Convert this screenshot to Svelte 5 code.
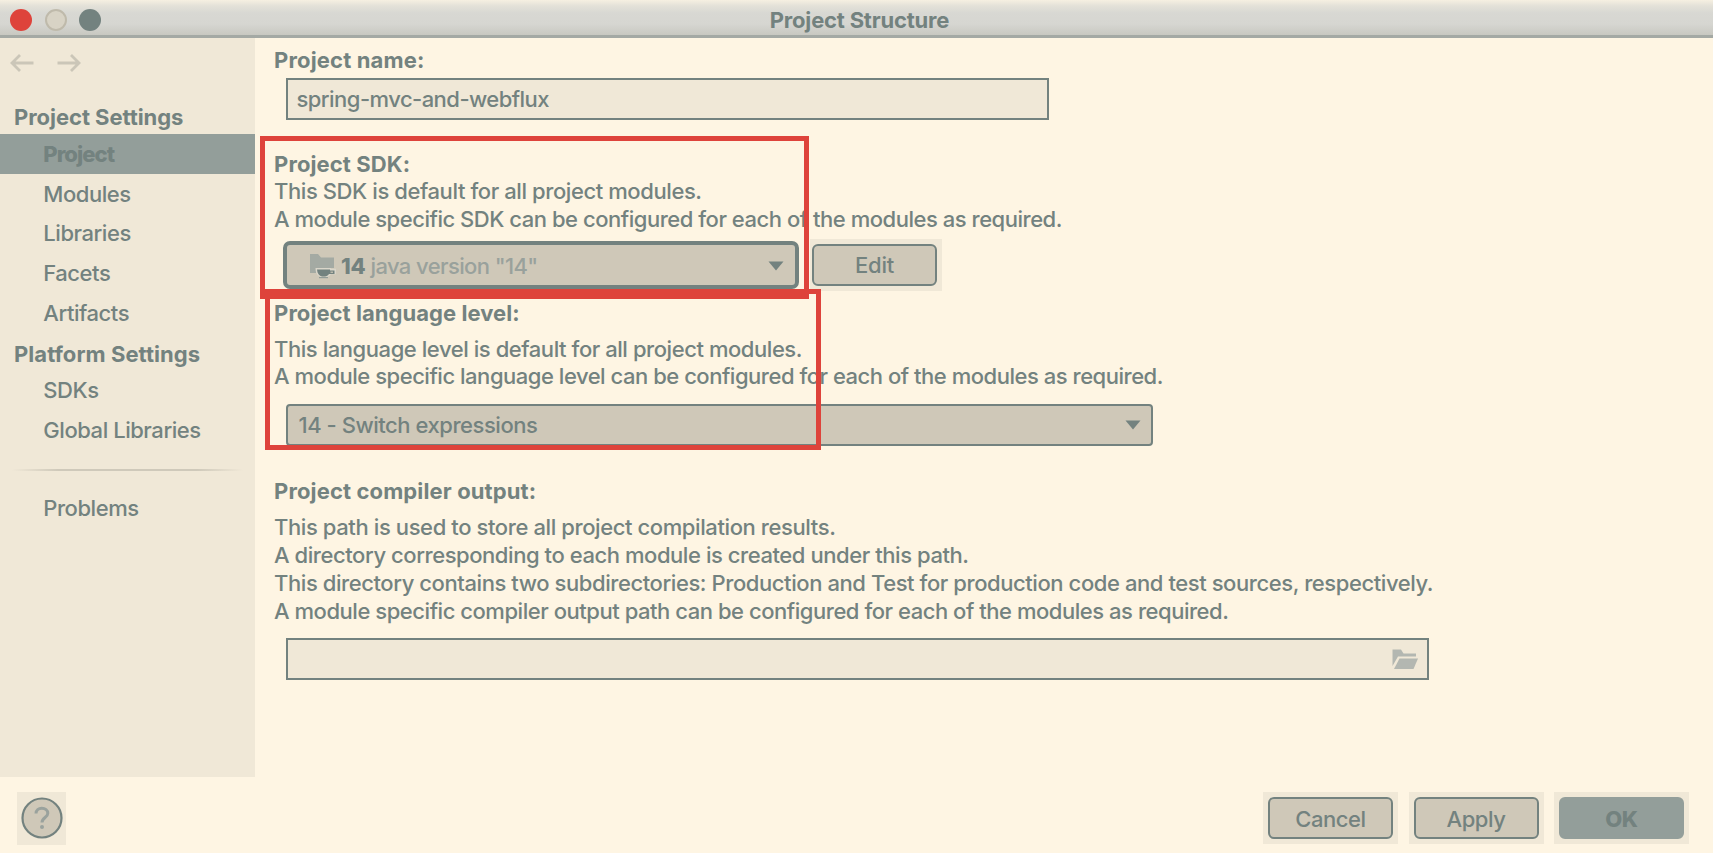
<script>
  const projectItems = ['Project', 'Modules', 'Libraries', 'Facets', 'Artifacts'];
  const platformItems = ['SDKs', 'Global Libraries'];
  let selected = $state('Project');

  // Each line carries its own tracking in px.
  const sdkText = [
    ['This SDK is default for all project modules.', -0.41],
    ['A module specific SDK can be configured for each of the modules as required.', -0.47],
  ];
  const levelText = [
    ['This language level is default for all project modules.', -0.44],
    ['A module specific language level can be configured for each of the modules as required.', -0.475],
  ];
  const outputText = [
    ['This path is used to store all project compilation results.', -0.4],
    ['A directory corresponding to each module is created under this path.', -0.435],
    ['This directory contains two subdirectories: Production and Test for production code and test sources, respectively.', -0.42],
    ['A module specific compiler output path can be configured for each of the modules as required.', -0.46],
  ];
</script>

{#snippet lines(list)}
  {#each list as [text, tracking]}
    <p style="letter-spacing:{tracking}px">{text}</p>
  {/each}
{/snippet}

{#snippet item(name)}
  <button class="item" class:selected={selected === name} onclick={() => (selected = name)}>{name}</button>
{/snippet}

<div class="window">
  <header class="titlebar">
    <div class="lights"><i class="red"></i><i class="pale"></i><i class="dark"></i></div>
    <h1>Project Structure</h1>
  </header>

  <div class="body">
    <nav>
      <div class="history">
        <svg width="24" height="18" viewBox="0 0 24 18"><path d="M23.500 9H2M10 1L2 9l8 8" /></svg>
        <svg width="24" height="18" viewBox="0 0 24 18"><path d="M0.500 9H22M14 1L22 9l-8 8" /></svg>
      </div>
      <h2>Project Settings</h2>
      {#each projectItems as name}{@render item(name)}{/each}
      <h2 class="platform">Platform Settings</h2>
      {#each platformItems as name}{@render item(name)}{/each}
      <div class="rule"></div>
      {@render item('Problems')}
    </nav>

    <main>
      <h3 class="name">Project name:</h3>
      <div class="field name-field">spring-mvc-and-webflux</div>

      <h3 class="sdk">Project SDK:</h3>
      {@render lines(sdkText)}
      <div class="sdk-row">
        <div class="combo focused">
          <svg class="jdk" width="28" height="26" viewBox="0 0 28 26">
            <path d="M1 1h8l3 3.500h13V15H1z" fill="#a4aaa3" />
            <path d="M1 14h6v6H1z" fill="#a4aaa3" />
            <path d="M6.500 15h15.500v0.800h5v5.500h-5c-1 1.500-2.500 2.200-3.500 2.400v1.300h-7v-1.300c-2.500-0.700-5-3-5-8.700z" fill="#dad6ca" />
            <path d="M8 16.500h13v1h4.500v3.500h-5.500c-1 1.500-2.500 2.300-4 2.500h-3c-2.700-.8-4.800-3-5-7z" fill="#73827f" />
            <path d="M21.500 18.600h2.500v1.200h-2.500z" fill="#cfc8b8" />
            <path d="M10 24h9v1.200h-9z" fill="#939d98" />
          </svg>
          <b>14</b><span class="version">java version "14"</span>
          <svg class="caret" width="16" height="10" viewBox="0 0 16 10"><path d="M0.500 0.500h15L8 9.500z" /></svg>
        </div>
        <div class="halo edit"><button class="btn">Edit</button></div>
      </div>

      <h3 class="level">Project language level:</h3>
      {@render lines(levelText)}
      <div class="combo level-combo">
        <span>14 - Switch expressions</span>
        <svg class="caret" width="16" height="10" viewBox="0 0 16 10"><path d="M0.500 0.500h15L8 9.500z" /></svg>
      </div>

      <h3 class="output">Project compiler output:</h3>
      {@render lines(outputText)}
      <div class="field output-field">
        <svg width="27" height="21" viewBox="0 0 27 21">
          <path d="M0.500 0.500h8.500l2.500 4h12.500v3H6L0.500 17z" fill="#b3b7b1" />
          <path d="M7.500 9.500H26l-4.500 10.500H2z" fill="#b3b7b1" />
        </svg>
      </div>
    </main>
  </div>

  <footer>
    <div class="halo help"><button aria-label="Help">
      <svg width="42" height="42" viewBox="0 0 42 42">
        <circle cx="21" cy="21" r="19.500" fill="#cfc8b8" stroke="#73827f" stroke-width="2.200" />
        <path d="M15 16.500c0-3.500 2.600-5.300 5.800-5.300 3.400 0 6 2 6 5 0 4.300-5.800 4.300-5.800 9.300" fill="none" stroke="#9aa29d" stroke-width="3" />
        <circle cx="21" cy="30" r="2" fill="#9aa29d" />
      </svg>
    </button></div>
    <div class="actions">
      <div class="halo"><button class="btn">Cancel</button></div>
      <div class="halo"><button class="btn">Apply</button></div>
      <div class="halo"><button class="btn primary">OK</button></div>
    </div>
  </footer>

  <div class="mark mark-sdk"></div>
  <div class="mark mark-level"></div>
</div>

<style>
  :global(body) { background: #fef5e3; }
  .window {
    position: relative;
    width: 1713px;
    height: 853px;
    overflow: hidden;
    display: flex;
    flex-direction: column;
    background: #fef5e3;
    color: #73827f;
    font: 500 22px/26px Inter, sans-serif;
    white-space: nowrap;
  }
  * { box-sizing: border-box; }
  h1, h2, h3, p { margin: 0; font-size: 22px; }
  h1, h2, h3 { font-weight: 700; }
  svg { display: block; flex: none; }
  button { font: inherit; color: inherit; letter-spacing: -0.45px; padding: 0; border: 0; background: none; }

  .titlebar {
    flex: none;
    height: 38px;
    display: grid;
    grid-template-columns: 1fr auto 1fr;
    align-items: center;
    padding: 0 0 0 10px;
    border-bottom: 3px solid #a4a9a4;
    background: linear-gradient(#f6f0e1 0, #e3e1d8 6px, #d8d8d3 13px, #d6d6d1 24px, #c8c8c1 35px);
  }
  .titlebar h1 { letter-spacing: -0.2px; position: relative; left: -2px; top: 2px; line-height: 28px; }
  .lights { display: flex; gap: 12.500px; padding-top: 4px; }
  .lights i { width: 22px; height: 22px; border-radius: 50%; }
  .red { background: #de433b; }
  .pale { background: #d8d3c5; border: 2px solid #bfbaab; }
  .dark { background: #73827f; }

  .body { flex: none; height: 739px; display: flex; }
  nav { width: 255px; background: #f0e8d7; display: flex; flex-direction: column; }
  .history { display: flex; gap: 23px; padding: 15.500px 0 0 10px; height: 66px; }
  .history path { fill: none; stroke: #cbc6b8; stroke-width: 2.8; }
  nav h2 { padding-left: 14px; height: 30px; line-height: 27px; letter-spacing: -0.05px; }
  nav .platform { height: 22px; line-height: 23px; margin-top: 10px; letter-spacing: 0.05px; margin-bottom: 5.500px; }
  .item { height: 39.800px; text-align: left; padding-left: 43.300px; flex: none; }
  .item.selected { background: #939e9a; font-weight: 800; letter-spacing: -0.95px; }
  .rule {
    height: 2px;
    margin: 18.500px 12px 17.500px;
    background: linear-gradient(90deg, transparent, #cfc9ba 20%, #cfc9ba 80%, transparent);
  }

  main { padding: 8.500px 0 0 18.500px; flex: 1; }
  main p { line-height: 27.800px; height: 27.800px; padding-left: 0.500px; }
  main h3 { padding-left: 0.600px; }
  .name { letter-spacing: 0.15px; }
  .field { display: flex; align-items: center; height: 42px; border: 2px solid #73827f; background: #f0e8d7; margin-left: 12.500px; }
  .name-field { width: 763px; margin-top: 5.500px; padding-left: 8.500px; letter-spacing: -0.54px; }
  .sdk { margin-top: 30.500px; margin-bottom: 1.600px; letter-spacing: 0.1px; }
  .sdk-row { display: flex; height: 52px; margin: 5.200px 0 0 9.500px; gap: 11px; }
  .combo {
    display: flex;
    align-items: center;
    background: #cfc8b8;
    border: 2px solid #73827f;
    border-radius: 4px;
    letter-spacing: -0.46px;
  }
  .caret { margin-left: auto; fill: #73827f; }
  .focused { width: 516px; height: 48px; margin-top: 2px; border-width: 4px; border-radius: 7px; padding: 2px 11px 0 22px; }
  .focused b { font-weight: 800; margin-left: 4px; letter-spacing: -0.2px; }
  .version { color: #99a19c; margin-left: 5px; letter-spacing: -0.6px; }
  .halo { background: #f0e8d7; display: flex; padding: 5px; }
  .halo.edit { width: 132px; padding: 5px 5px 5px 2px; }
  .btn { width: 100%; border: 2px solid #73827f; border-radius: 6px; background: #cfc8b8; padding-top: 1px; }
  .halo.edit .btn { letter-spacing: -0.2px; }
  .level { margin-top: 8.700px; margin-bottom: 10px; letter-spacing: 0.05px; }
  .level-combo { width: 867px; height: 42px; margin: 12.700px 0 0 12.500px; padding: 1px 10px 0 10.500px; }
  .output { margin-top: 32px; margin-bottom: 10.500px; letter-spacing: 0.12px; }
  .output-field { width: 1143px; margin-top: 12.800px; justify-content: flex-end; padding-right: 8px; }

  footer { flex: 1; display: flex; justify-content: space-between; align-items: flex-start; padding: 15px 24px 0 17px; }
  .help { width: 49px; height: 53px; padding: 5px 0 0 4px; }
  .help button { height: 42px; }
  .actions { display: flex; gap: 10.500px; }
  .actions .halo { width: 135px; height: 52px; }
  .btn.primary { background: #939e9a; border-color: #939e9a; font-weight: 800; }

  .mark { position: absolute; border: 5px solid #de433b; }
  .mark-sdk { left: 260px; top: 136px; width: 549px; height: 163px; }
  .mark-level { left: 265px; top: 289px; width: 556px; height: 161px; }
</style>
